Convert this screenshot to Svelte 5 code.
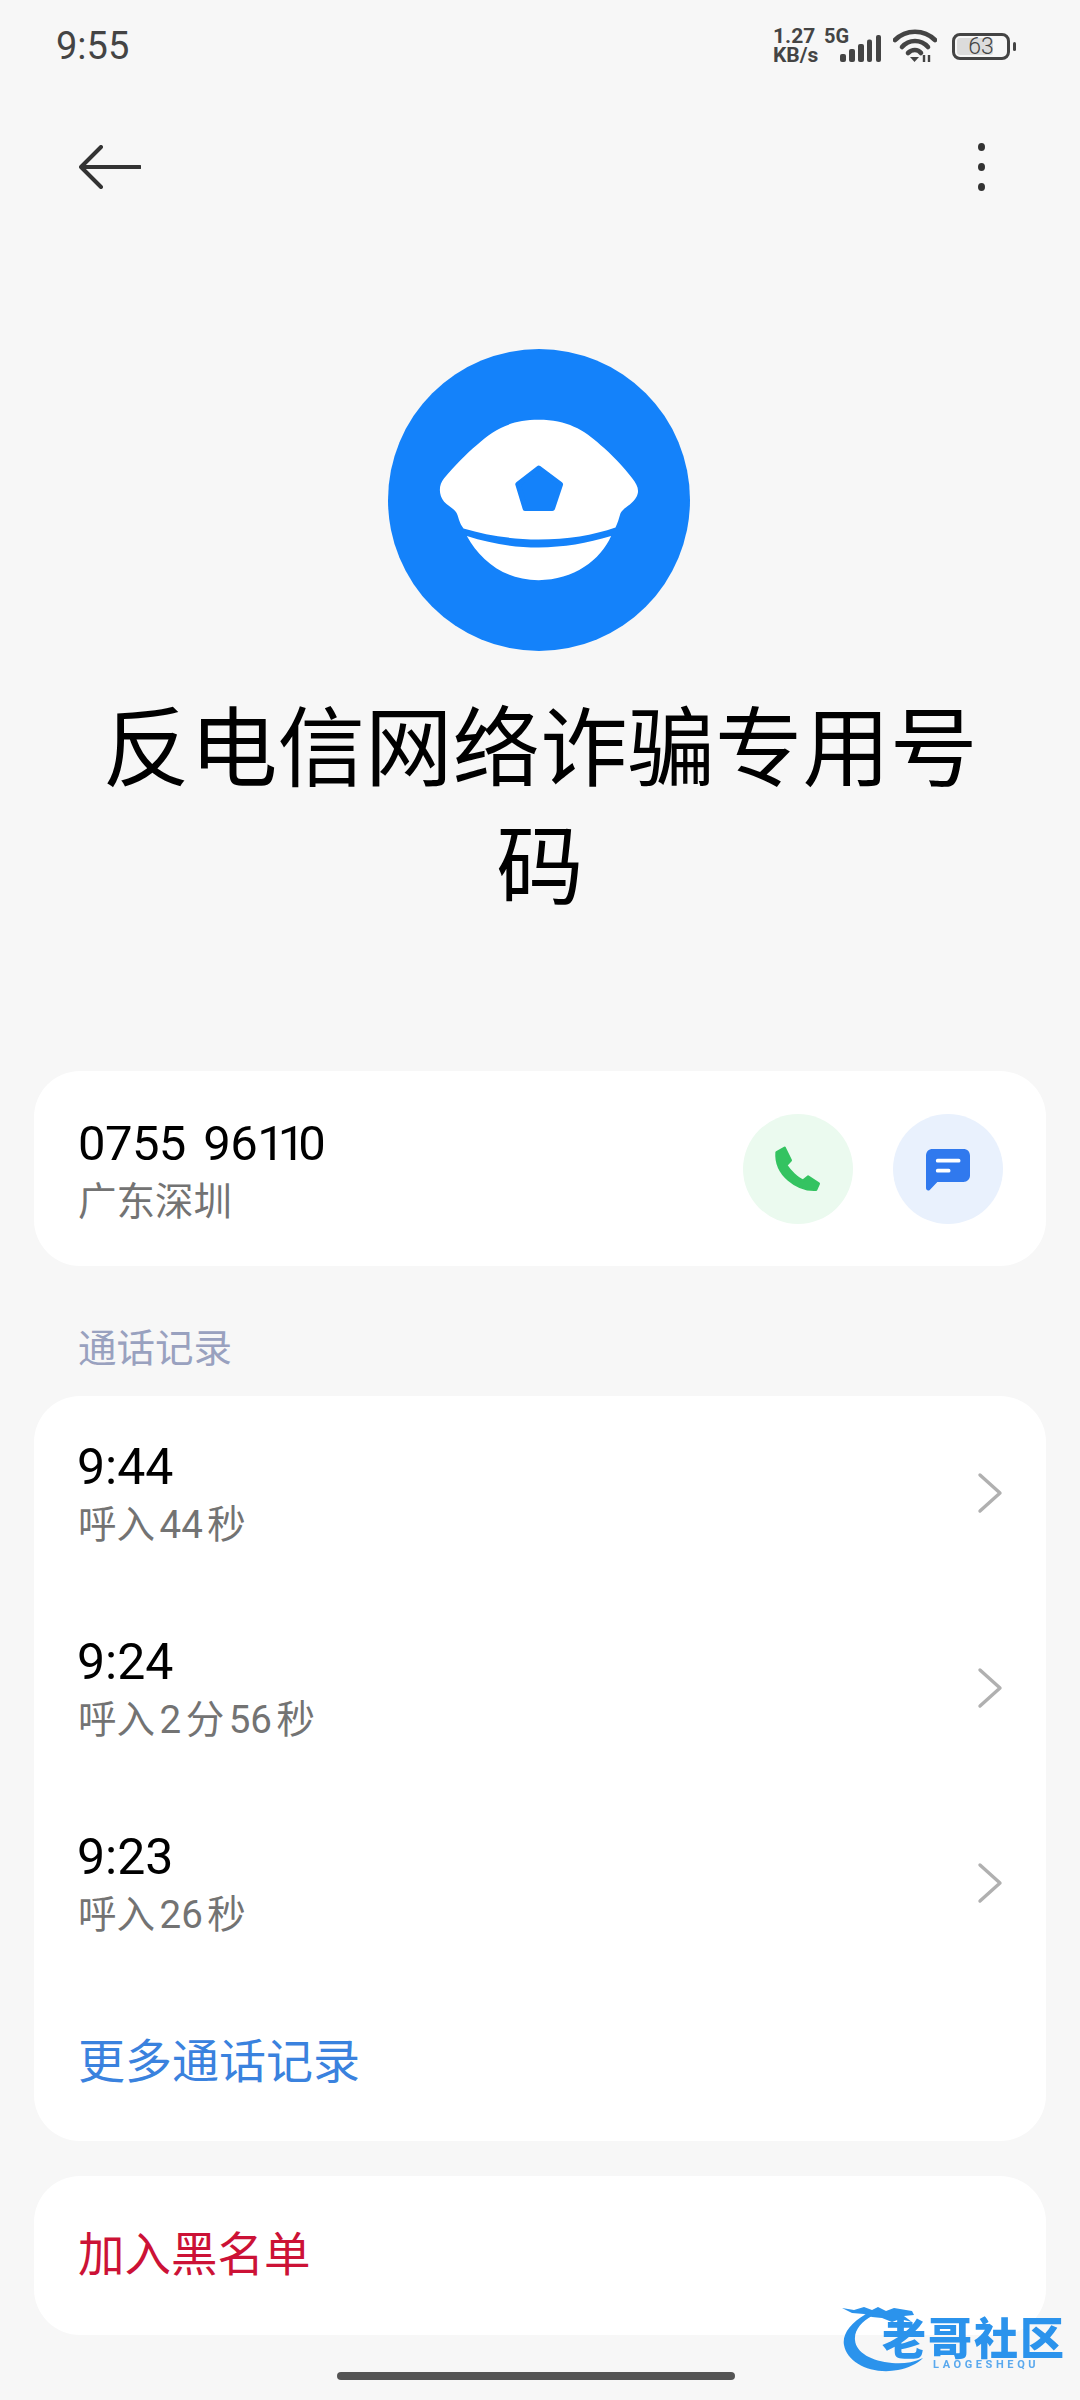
<script>
  // call detail page for one number
  const calls = [
    { time: '9:44', desc: '呼入44秒' },
    { time: '9:24', desc: '呼入2分56秒' },
    { time: '9:23', desc: '呼入26秒' },
  ];

  // digits sit a little apart from the CJK around them
  const pieces = (s) => s.split(/(\d+)/).filter(Boolean);
</script>

<div class="page">
  <div class="status">
    <span class="clock">9:55</span>
    <div class="status-icons">
      <div class="speed"><span>1.27</span><span>KB/s</span></div>
      <div class="net">
        <span class="five">5G</span>
        <svg class="signal" width="42" height="28" viewBox="0 0 42 28">
          <g fill="#444">
            <rect x="0" y="19" width="6" height="8" rx="2" />
            <rect x="9" y="14" width="6" height="13" rx="2" />
            <rect x="18" y="9" width="6" height="18" rx="2" />
            <rect x="27" y="4.5" width="5" height="22.5" rx="2" />
            <rect x="36" y="0" width="5" height="27" rx="2" />
          </g>
        </svg>
      </div>
      <svg class="wifi" width="44" height="34" viewBox="0 0 44 34">
        <g fill="none" stroke="#444" stroke-width="4.6" stroke-linecap="round">
          <path d="M2 11 C13 0 31 0 42 11" />
          <path d="M9 18 C16 10 28 10 35 18" />
          <path d="M15 24 C19 20 25 20 28 24" />
        </g>
        <path d="M17 28 L26 28 L21.5 33 Z" fill="#444" />
        <path d="M31 33 V26 M36 26 V33" stroke="#444" stroke-width="2.4" fill="none" />
      </svg>
      <div class="battery">
        <div class="cell">
          <div class="level"></div>
          <span>63</span>
        </div>
        <div class="nub"></div>
      </div>
    </div>
  </div>

  <header class="toolbar">
    <svg width="62" height="44" viewBox="0 0 62 44">
      <path d="M61 22 H3 M22 2 L2 22 L22 42" fill="none" stroke="#333" stroke-width="4" stroke-linecap="round" stroke-linejoin="round" />
    </svg>
    <div class="more"><i></i><i></i><i></i></div>
  </header>

  <section class="hero">
    <svg class="avatar" width="302" height="302" viewBox="54 58 904 904">
      <circle cx="506" cy="510" r="452" fill="#1482fa" />
      <path fill="#fff" d="M505 270 C420 270 370 300 320 345 C290 370 250 410 222 445 C205 465 205 495 222 515 C235 530 255 535 262 555 C268 575 272 585 280 595 C350 615 420 628 505 628 C590 628 670 615 735 592 C742 580 745 565 750 550 C760 530 785 525 798 500 C808 480 800 465 785 445 C760 410 720 370 690 345 C640 300 590 270 505 270 Z" />
      <path fill="#1482fa" stroke="#1482fa" stroke-width="16" stroke-linejoin="round" d="M505 415 L570 463 L546 535 L465 535 L443 463 Z" />
      <path fill="#fff" d="M290 618 C360 640 430 652 505 652 C580 652 650 640 722 618 C690 690 610 750 505 750 C400 750 330 690 290 618 Z" />
    </svg>
    <h1>反电信网络诈骗专用号码</h1>
  </section>

  <div class="card number-card">
    <div class="number-text">
      <div class="main phone">0755 96<span class="ones">11</span>0</div>
      <div class="sub">广东深圳</div>
    </div>
    <div class="actions">
      <div class="round green">
        <svg width="110" height="110" viewBox="72 68 330 330">
          <path fill="#34c361" stroke="#34c361" stroke-width="8" stroke-linejoin="round" d="M173 183 L197 170 L215 207 L201 222 C213 240 235 262 252 268 L267 256 L299 277 L291 295 C235 298 168 250 173 183 Z" />
        </svg>
      </div>
      <div class="round blue">
        <svg width="110" height="110" viewBox="519 68 330 330">
          <path fill="#3079ee" d="M638 173 H730 C742 173 750 181 750 193 V252 C750 264 742 272 730 272 H652 L630 295 C625 300 618 297 618 290 V193 C618 181 626 173 638 173 Z" />
          <path d="M653 208 H716 M653 238 H686" stroke="#fff" stroke-width="11" stroke-linecap="round" fill="none" />
        </svg>
      </div>
    </div>
  </div>

  <div class="section-label">通话记录</div>

  <div class="card log-card">
    {#each calls as c}
      <div class="row">
        <div>
          <div class="main time">{c.time}</div>
          <div class="sub">
            {#each pieces(c.desc) as p}
              {#if /\d/.test(p)}<span class="num">{p}</span>{:else}{p}{/if}
            {/each}
          </div>
        </div>
        <svg class="chevron" width="26" height="42" viewBox="0 0 26 42">
          <path d="M3 3 L23 21 L3 39" fill="none" stroke="#b0b0b0" stroke-width="3.4" stroke-linecap="round" stroke-linejoin="round" />
        </svg>
      </div>
    {/each}
    <div class="more-log">更多通话记录</div>
  </div>

  <div class="card block-card">加入黑名单</div>

  <div class="home-bar"></div>

  <!-- forum watermark over the bottom corner -->
  <div class="watermark">
    <svg width="110" height="72" viewBox="0 0 110 72">
      <path fill="#2b93ec" d="M24 11 C8 20 0 32 2 42 C5 60 30 72 56 67 C66 65 75 61 81 55 C70 60 60 61 50 60 C30 58 14 50 13 37 C12 27 20 18 30 13 Z" />
      <path fill="#2b93ec" d="M0 5 L12 7 L22 4 L30 7 L36 4 L44 8 L52 5 L70 8 L72 12 L62 13 L70 19 L58 16 L50 19 L40 15 L30 14 L22 11 L10 10 Z" />
    </svg>
    <div class="wm-name">老哥社区</div>
    <div class="wm-latin">LAOGESHEQU</div>
  </div>
</div>

<style>
  :global(body) {
    margin: 0;
    background: #f7f7f7;
  }
  .page {
    position: relative;
    width: 1080px;
    height: 2400px;
    overflow: hidden;
    background: #f7f7f7;
    font-family: Roboto, "Noto Sans CJK SC", sans-serif;
    color: #000;
  }
  .status {
    height: 92px;
    padding: 0 64px 0 56px;
    box-sizing: border-box;
    display: flex;
    align-items: center;
    justify-content: space-between;
    color: #444;
  }
  .clock {
    font-size: 38px;
    line-height: 92px;
  }
  .status-icons {
    display: flex;
    align-items: center;
  }
  .speed {
    display: flex;
    flex-direction: column;
    font-size: 21px;
    font-weight: 700;
    line-height: 19px;
    width: 50px;
  }
  .net {
    position: relative;
    width: 60px;
    height: 34px;
  }
  .five {
    position: absolute;
    left: 1px;
    top: -3px;
    font-size: 20px;
    font-weight: 700;
    line-height: 20px;
  }
  .signal {
    position: absolute;
    left: 17px;
    top: 6px;
  }
  .wifi {
    margin-left: 10px;
  }
  .battery {
    display: flex;
    align-items: center;
    margin-left: 15px;
    gap: 3px;
  }
  .cell {
    position: relative;
    width: 58px;
    height: 27px;
    box-sizing: border-box;
    border: 3px solid #444;
    border-radius: 8px;
    display: flex;
    align-items: center;
    justify-content: center;
    font-size: 23px;
    font-weight: 300;
    line-height: 21px;
  }
  .cell span {
    position: relative;
  }
  .level {
    position: absolute;
    left: 2px;
    top: 2px;
    bottom: 2px;
    width: 36px;
    border-radius: 3px;
    background: #dcdcdc;
  }
  .nub {
    width: 3px;
    height: 9px;
    border-radius: 2px;
    background: #444;
  }
  .toolbar {
    height: 150px;
    padding: 0 95px 0 79px;
    box-sizing: border-box;
    display: flex;
    align-items: center;
    justify-content: space-between;
  }
  .more {
    display: flex;
    flex-direction: column;
    gap: 12px;
  }
  .more i {
    display: block;
    width: 7px;
    height: 8px;
    border-radius: 50%;
    background: #333;
  }
  .hero {
    padding-top: 107px;
    display: flex;
    flex-direction: column;
    align-items: center;
  }
  .avatar {
    display: block;
    margin-right: 3px;
  }
  h1 {
    margin: 40px 0 144px;
    width: 900px;
    font-size: 87.5px;
    line-height: 118px;
    font-weight: 400;
    text-align: center;
  }
  .card {
    margin: 0 34px;
    background: #fff;
    border-radius: 46px;
  }
  .number-card {
    height: 195px;
    padding: 0 43px 0 44px;
    display: flex;
    align-items: center;
    justify-content: space-between;
  }
  .number-text {
    padding-top: 8px;
  }
  .main {
    font-size: 49px;
    line-height: 58px;
  }
  .time {
    font-size: 50px;
    margin-left: -1px;
  }
  .phone {
    word-spacing: 6px;
    letter-spacing: -0.6px;
  }
  .ones {
    letter-spacing: -7px;
  }
  .sub {
    font-size: 38.5px;
    line-height: 58px;
    color: #737373;
  }
  .num {
    margin: 0 4.5px;
  }
  .actions {
    display: flex;
    gap: 40px;
  }
  .round {
    width: 110px;
    height: 110px;
    border-radius: 50%;
  }
  .round svg {
    display: block;
  }
  .green {
    background: #ebfaef;
  }
  .blue {
    background: #e9f1fd;
  }
  .section-label {
    padding: 53px 78px 17px;
    font-size: 38.5px;
    line-height: 60px;
    color: #99a1bf;
  }
  .log-card {
    padding: 2px 44px 0;
    height: 745px;
    box-sizing: border-box;
  }
  .row {
    height: 195px;
    display: flex;
    align-items: center;
    justify-content: space-between;
  }
  .chevron {
    margin: 0 -1px 6px 0;
  }
  .more-log {
    font-size: 47px;
    line-height: 158px;
    color: #3a82de;
  }
  .block-card {
    margin-top: 35px;
    height: 159px;
    padding: 0 44px;
    font-size: 46.5px;
    line-height: 159px;
    color: #cc1236;
  }
  .home-bar {
    margin: 37px 0 0 337px;
    width: 398px;
    height: 8px;
    border-radius: 4px;
    background: #545454;
  }
  .watermark {
    position: absolute;
    left: 842px;
    top: 2303px;
    width: 225px;
    height: 72px;
    filter: blur(0.5px);
  }
  .watermark svg {
    position: absolute;
    left: 0;
    top: 0;
  }
  .wm-name {
    position: absolute;
    left: 40px;
    top: 19px;
    font-size: 44px;
    line-height: 36px;
    font-weight: 900;
    letter-spacing: 2px;
    white-space: nowrap;
    color: #2b93ec;
  }
  .wm-latin {
    position: absolute;
    left: 91px;
    top: 56px;
    font-size: 11px;
    line-height: 12px;
    font-weight: 700;
    letter-spacing: 3.6px;
    white-space: nowrap;
    color: #5aa9ee;
  }
</style>
